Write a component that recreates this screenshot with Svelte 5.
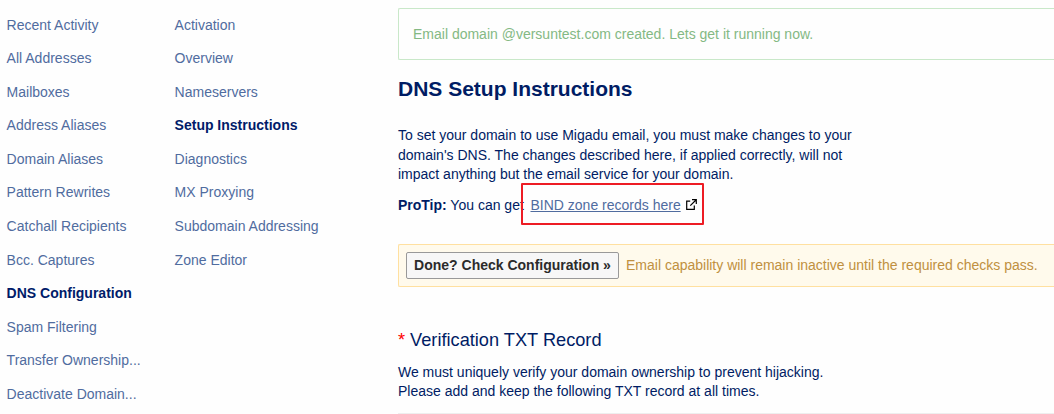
<script>
  const domainLinks = [
    'Recent Activity', 'All Addresses', 'Mailboxes', 'Address Aliases',
    'Domain Aliases', 'Pattern Rewrites', 'Catchall Recipients', 'Bcc. Captures',
    'DNS Configuration', 'Spam Filtering', 'Transfer Ownership...', 'Deactivate Domain...'
  ];
  const dnsLinks = [
    'Activation', 'Overview', 'Nameservers', 'Setup Instructions',
    'Diagnostics', 'MX Proxying', 'Subdomain Addressing', 'Zone Editor'
  ];
  const menus = [
    { name: 'Domain', links: domainLinks, active: 'DNS Configuration' },
    { name: 'DNS', links: dnsLinks, active: 'Setup Instructions' }
  ];
</script>

<div class="page">
  {#each menus as menu}
    <nav aria-label={menu.name}>
      {#each menu.links as link}
        <a href="#top" class:active={link === menu.active}>{link}</a>
      {/each}
    </nav>
  {/each}

  <main>
    <div class="notice">Email domain @versuntest.com created. Lets get it running now.</div>
    <h1>DNS Setup Instructions</h1>
    <p class="intro">
      To set your domain to use Migadu email, you must make changes to your<br />
      domain's DNS. The changes described here, if applied correctly, will not<br />
      impact anything but the email service for your domain.
    </p>
    <div class="tip">
      <span class="lead"><b>ProTip:</b> You can get</span>
      <span class="marked">
        <a href="#zone">BIND zone records here</a>
        <svg width="11" height="11" viewBox="0 0 11 11" fill="none" stroke="#000" stroke-width="1.2">
          <path d="M4.2 2.1H.7v8.2h7.6V6.6M6 .7h4.3V5M10 1 4.3 6.7" />
        </svg>
      </span>
    </div>
    <div class="warning">
      <button>Done? Check Configuration »</button>
      <span>Email capability will remain inactive until the required checks pass.</span>
    </div>
    <h2><span class="star">*</span> Verification TXT Record</h2>
    <p class="record">
      We must uniquely verify your domain ownership to prevent hijacking.<br />
      Please add and keep the following TXT record at all times.
    </p>
    <hr />
  </main>
</div>

<style>
  :global(body) { background: #fefefe; }
  .page {
    display: grid;
    grid-template-columns: 168px 223.4px 1fr;
    width: 1054px;
    height: 414px;
    padding-left: 6.6px;
    box-sizing: border-box;
    overflow: hidden;
    font: 14px/19.6px "Liberation Sans", Arial, sans-serif;
    color: #001c64;
  }
  nav {
    display: flex;
    flex-direction: column;
    gap: 14px;
    padding-top: 15.5px;
  }
  nav a { color: #506c9f; text-decoration: none; white-space: nowrap; }
  nav a.active { color: #001b69; font-weight: 700; }
  main { display: flex; flex-direction: column; white-space: nowrap; min-width: 0; }
  .notice {
    box-sizing: border-box;
    height: 52px;
    margin-top: 8px;
    padding: 16px 14px 14px;
    border: 1px solid #c9e8c9;
    border-right: 0;
    border-radius: 2px 0 0 2px;
    color: #84b984;
  }
  h1 { margin: 15px 0 0; font-size: 21px; line-height: 28px; }
  p { margin: 0; }
  .intro { margin-top: 23px; }
  .tip { display: flex; align-items: center; height: 42px; margin-top: -1.8px; }
  .lead { width: 123px; flex: none; padding-top: 3px; }
  .marked {
    display: flex;
    align-items: center;
    box-sizing: border-box;
    width: 183px;
    height: 42px;
    padding: 3px 0 0 7.5px;
    border: 2px solid #ed1c24;
    border-radius: 1px;
  }
  .marked a { color: #506c9f; }
  .marked svg { margin: 0 0 1px 5px; }
  .warning {
    display: flex;
    align-items: center;
    gap: 7px;
    box-sizing: border-box;
    height: 43px;
    margin-top: 19px;
    padding: 0 0 0 7px;
    border: 1px solid #ffe0a0;
    border-right: 0;
    border-radius: 2px 0 0 2px;
    background: #fffaec;
    color: #c09040;
  }
  .warning span { padding-top: 1px; }
  button {
    box-sizing: border-box;
    width: 213px;
    height: 27px;
    padding: 0 0 1px;
    border: 1px solid #999;
    border-radius: 2px;
    background: #f7f7f7;
    color: #2b2b2b;
    font: 700 14px/20px "Liberation Sans", Arial, sans-serif;
  }
  h2 { margin: 41px 0 0; font-size: 18.2px; line-height: 25px; font-weight: 400; }
  .star { color: #f00; }
  .record { margin-top: 9.7px; }
  hr { width: 100%; height: 1px; flex: none; margin: 10.9px 0 0; border: 0; background: #eee; }
</style>
